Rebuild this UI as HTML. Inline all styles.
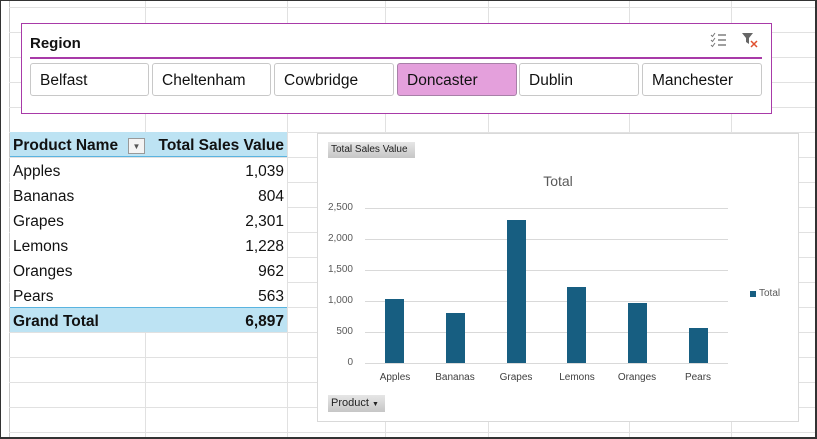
<!DOCTYPE html>
<html><head><style>
*{margin:0;padding:0;box-sizing:border-box}
body{width:817px;height:439px;position:relative;overflow:hidden;background:#fff;font-family:"Liberation Sans",sans-serif}
.a{position:absolute}
.h{position:absolute;left:9px;right:0;height:1px;background:#e1e1e1}
.v{position:absolute;top:0;bottom:0;width:1px;background:#e1e1e1}
.btn{position:absolute;top:63px;height:33px;border:1px solid #c8c8c8;border-radius:3px;background:#fff;font-size:15.5px;padding:8px 0 0 9px;color:#111}
.row{position:absolute;left:10px;width:277px;height:25px;font-size:15.5px;padding:5px 3px 0 3px;color:#111;background:#fff}
.row span{float:right}
.yl{position:absolute;left:317px;width:36px;text-align:right;font-size:10px;color:#595959}
.bar{position:absolute;width:19px;background:#175e81}
.xl{position:absolute;top:372px;width:60px;text-align:center;font-size:10px;color:#404040}
</style></head><body>
<div class="v" style="left:9px;background:#c8c8c8"></div>
<div class="h" style="top:7px"></div><div class="h" style="top:32px"></div><div class="h" style="top:57px"></div><div class="h" style="top:82px"></div><div class="h" style="top:107px"></div><div class="h" style="top:132px"></div><div class="h" style="top:157px"></div><div class="h" style="top:182px"></div><div class="h" style="top:207px"></div><div class="h" style="top:232px"></div><div class="h" style="top:257px"></div><div class="h" style="top:282px"></div><div class="h" style="top:307px"></div><div class="h" style="top:332px"></div><div class="h" style="top:357px"></div><div class="h" style="top:382px"></div><div class="h" style="top:407px"></div><div class="h" style="top:432px"></div>
<div class="v" style="left:145px"></div><div class="v" style="left:287px"></div><div class="v" style="left:385px"></div><div class="v" style="left:488px"></div><div class="v" style="left:629px"></div><div class="v" style="left:731px"></div>

<div class="a" style="left:21px;top:23px;width:751px;height:91px;border:1px solid #a83aa8;background:#fff"></div>
<div class="a" style="left:30px;top:35px;font-size:15px;font-weight:bold;color:#111">Region</div>
<div class="a" style="left:30px;top:57px;width:732px;height:2px;background:#a83aa8"></div>
<svg class="a" style="left:710px;top:32px" width="18" height="16"><path d="M1 3l1.5 1.5L5 1M1 8l1.5 1.5L5 6M1 13l1.5 1.5L5 11" stroke="#777" fill="none"/><path d="M8 3h8M8 8h8M8 13h8" stroke="#666" stroke-width="1.2"/></svg>
<svg class="a" style="left:741px;top:32px" width="18" height="16"><path d="M1 1h11l-4 5v6l-3-2V6z" fill="#666"/><path d="M10 9l6 6M16 9l-6 6" stroke="#e05030" stroke-width="1.5"/></svg>
<div class="btn" style="left:30px;width:119px">Belfast</div>
<div class="btn" style="left:152px;width:119px">Cheltenham</div>
<div class="btn" style="left:274px;width:120px">Cowbridge</div>
<div class="btn" style="left:397px;width:120px;background:#e4a0dc;border-color:#a880a8">Doncaster</div>
<div class="btn" style="left:519px;width:120px">Dublin</div>
<div class="btn" style="left:642px;width:120px">Manchester</div>

<div class="row" style="top:132px;background:#bde3f3;font-weight:bold;border-bottom:1px solid #5ab4e0">Product Name<span>Total Sales Value</span></div>
<div class="a" style="left:128px;top:138px;width:17px;height:16px;border:1px solid #999;background:#f4f4f4;font-size:8px;color:#555;text-align:center;line-height:15px">▼</div>
<div class="row" style="top:158px">Apples<span>1,039</span></div>
<div class="row" style="top:183px">Bananas<span>804</span></div>
<div class="row" style="top:208px">Grapes<span>2,301</span></div>
<div class="row" style="top:233px">Lemons<span>1,228</span></div>
<div class="row" style="top:258px">Oranges<span>962</span></div>
<div class="row" style="top:283px;height:24px">Pears<span>563</span></div>
<div class="row" style="top:307px;background:#bde3f3;font-weight:bold;border-top:1px solid #5ab4e0">Grand Total<span>6,897</span></div>

<div class="a" style="left:317px;top:133px;width:482px;height:289px;border:1px solid #d9d9d9;background:#fff"></div>
<div class="a" style="left:328px;top:142px;width:87px;height:16px;background:linear-gradient(#e6e6e6,#c6c6c6);font-size:10px;padding:2px 3px;color:#222">Total Sales Value</div>
<div class="a" style="left:317px;top:173px;width:482px;text-align:center;font-size:14px;color:#595959">Total</div>
<div class="a" style="left:365px;top:208px;width:363px;height:1px;background:#d9d9d9"></div>
<div class="a" style="left:365px;top:239px;width:363px;height:1px;background:#d9d9d9"></div>
<div class="a" style="left:365px;top:270px;width:363px;height:1px;background:#d9d9d9"></div>
<div class="a" style="left:365px;top:301px;width:363px;height:1px;background:#d9d9d9"></div>
<div class="a" style="left:365px;top:332px;width:363px;height:1px;background:#d9d9d9"></div>
<div class="a" style="left:365px;top:363px;width:363px;height:1px;background:#d9d9d9"></div>
<div class="yl" style="top:202px">2,500</div><div class="yl" style="top:233px">2,000</div><div class="yl" style="top:264px">1,500</div><div class="yl" style="top:295px">1,000</div><div class="yl" style="top:326px">500</div><div class="yl" style="top:357px">0</div>
<div class="bar" style="left:385px;top:299px;height:64px"></div>
<div class="bar" style="left:446px;top:313px;height:50px"></div>
<div class="bar" style="left:507px;top:220px;height:143px"></div>
<div class="bar" style="left:567px;top:287px;height:76px"></div>
<div class="bar" style="left:628px;top:303px;height:60px"></div>
<div class="bar" style="left:689px;top:328px;height:35px"></div>
<div class="xl" style="left:365px">Apples</div><div class="xl" style="left:425px">Bananas</div><div class="xl" style="left:486px">Grapes</div><div class="xl" style="left:547px">Lemons</div><div class="xl" style="left:607px">Oranges</div><div class="xl" style="left:668px">Pears</div>
<div class="a" style="left:750px;top:291px;width:6px;height:6px;background:#175e81"></div>
<div class="a" style="left:759px;top:288px;font-size:10px;color:#595959">Total</div>
<div class="a" style="left:328px;top:395px;width:57px;height:17px;background:linear-gradient(#e6e6e6,#c6c6c6);font-size:11px;padding:2px 3px;color:#222">Product <span style="font-size:7px">▼</span></div>

<div class="a" style="left:0;top:0;width:817px;height:439px;border:1.5px solid #333;border-right-width:2px;border-bottom-width:2px"></div>
</body></html>
